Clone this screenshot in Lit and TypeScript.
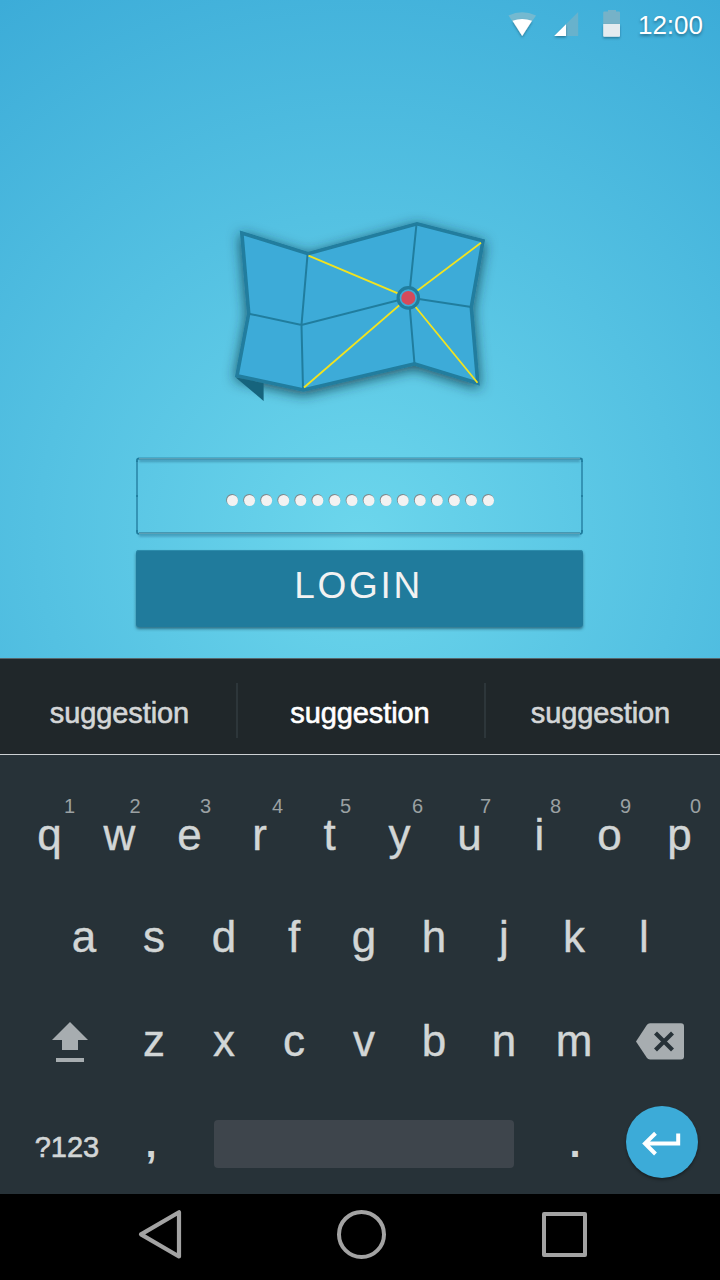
import { LitElement, html, css, svg } from "lit";
import { customElement } from "lit/decorators.js";

type Key = [letter: string, hint: string, shift: number];

const TOP_ROW: Key[] = [
  ["q", "1", 20], ["w", "2", 15.5], ["e", "3", 16], ["r", "4", 18], ["t", "5", 16],
  ["y", "6", 18], ["u", "7", 16], ["i", "8", 16], ["o", "9", 16], ["p", "0", 16],
];

@customElement("login-screen")
export class LoginScreen extends LitElement {
  static styles = css`
    :host {
      display: flex;
      flex-direction: column;
      align-items: center;
      height: 658px;
      background: radial-gradient(circle at 360px 537px, #6cd6ec 0, #3cacd8 645px);
    }
    .status {
      display: flex;
      align-self: stretch;
      height: 50px;
      justify-content: flex-end;
      padding-right: 17px;
      box-sizing: border-box;
    }
    .icons { width: 130px; height: 50px; }
    .clock {
      font-size: 26px;
      line-height: 50px;
      color: #fff;
      text-shadow: 0 2px 3px rgba(0, 40, 60, 0.45);
    }
    .map { display: block; margin: 160px 0 47px; width: 280px; height: 200px; overflow: visible; }
    .field, .login { width: 447px; display: block; overflow: visible; margin-right: 1px; }
    .field { margin-bottom: 15px; height: 78px; }
    .login {
      height: 77px;
      border: 0;
      padding: 0 2px 5px 0;
      box-sizing: border-box;
      border-radius: 3px;
      background: #207b9c;
      box-shadow: 0 2px 3px rgba(0, 30, 45, 0.5), inset 0 1px 0 #2c8cac;
      color: #f2f2f2;
      font: 37px/70px "Liberation Sans", Arial, sans-serif;
      letter-spacing: 2.7px;
      text-align: center;
    }
  `;

  render() {
    return html`
      <div class="status">
        <svg class="icons" viewBox="0 0 130 50">
          <defs>
            <filter id="s" x="-20%" y="-20%" width="140%" height="150%">
              <feDropShadow dx="0" dy="1.5" stdDeviation="1.2" flood-color="#003048" flood-opacity=".45" />
            </filter>
          </defs>
          <path d="M0.500 15.500Q14 9 28 15.500L14.200 36Z" fill="#74b9d0" />
          <path d="M4.500 20.800Q14 17 24 20.800L14.200 36Z" fill="#fff" filter="url(#s)" />
          <path d="M70.200 12V36H46.200Z" fill="#68b2cc" />
          <path d="M58 24.200V36H46.200Z" fill="#fff" filter="url(#s)" />
          <path d="M95.200 24V12.500Q95.200 11.500 96.200 11.500H100V10H108V11.500H111Q112 11.500 112 12.500V24Z" fill="#76b2c8" />
          <path d="M95.200 24H112V35.800Q112 36.800 111 36.800H96.200Q95.200 36.800 95.200 35.800Z" fill="#e4ebef" filter="url(#s)" />
        </svg>
        <span class="clock">12:00</span>
      </div>
      <svg class="map" viewBox="0 0 280 200">
        <defs>
          <filter id="m" x="-20%" y="-20%" width="140%" height="150%">
            <feDropShadow dx="0" dy="3" stdDeviation="6.500" flood-color="#0a2a38" flood-opacity=".78" />
          </filter>
        </defs>
        <path filter="url(#m)" d="M21.800 23L88 43.700L197 13.800L263 30.800L251.300 97L257.800 173.300L194.500 153.800L83.500 180L17 165.700L28.700 103.500Z"
          fill="#3cabd8" stroke="#207d9e" stroke-width="3.600" />
        <path d="M15.500 167.200L43.600 191V173.200Z" fill="#16647d" />
        <path d="M87.600 44L81.500 115L83 179M196.500 14L189 88L194.500 154M28.700 103.700L81.500 115L189 87.500L251.300 97" fill="none" stroke="#207d9e" stroke-width="2" />
        <path d="M88.500 45.700L188 87.700L261 32.800M84 177.500L188 87.700L257.500 172.700" fill="none" stroke="#f2e31f" stroke-width="1.800" />
        <circle cx="188.300" cy="87.900" r="10.200" fill="#3cabd8" stroke="#207d9e" stroke-width="3.200" />
        <circle cx="188.300" cy="87.900" r="7" fill="#d64a5b" />
      </svg>
      <svg class="field" viewBox="0 0 447 78">
        <defs>
          <filter id="f" x="-5%" y="-10" width="110%" height="98" filterUnits="userSpaceOnUse">
            <feDropShadow dx="0" dy="2" stdDeviation="1.200" flood-color="#003048" flood-opacity=".3" />
          </filter>
        </defs>
        <g filter="url(#f)">
          <rect x="3" y="0.500" width="441" height="2.500" fill="#3592b2" />
          <rect x="3" y="75" width="441" height="2.500" fill="#3592b2" />
        </g>
        <path d="M3 1.800H444M3 76.200H444" stroke="#79a9b9" stroke-width=".8" />
        <path d="M1 4V75M446 4V75" stroke="#3494b5" stroke-width="2" />
        <path d="M1 5V3Q1 1.500 3 1.500M444 1.500Q446 1.500 446 3V5M1 73V75Q1 76.800 3 76.800M444 76.800Q446 76.800 446 75V73M1 38V40M446 38V40" stroke="#207d9e" stroke-width="1.800" fill="none" />
        ${Array.from({ length: 16 }, (_, i) => svg`
          <circle cx=${96 + i * 17.07} cy="42.800" r="5.900" fill="#80888b" />
          <circle cx=${96.5 + i * 17.07} cy="43.500" r="5.500" fill="#f2f2f2" />`)}
      </svg>
      <button class="login">LOGIN</button>
    `;
  }
}

@customElement("soft-keyboard")
export class SoftKeyboard extends LitElement {
  static styles = css`
    :host { display: block; height: 536px; background: #273238; color: #d2d6d6; }
    .suggestions {
      display: flex;
      align-items: center;
      height: 97px;
      box-sizing: border-box;
      padding-top: 7px;
      background: #20272a;
      border-top: 1px solid #56666c;
      border-bottom: 1px solid #ccd1d4;
      font-size: 29px;
      letter-spacing: -0.1px;
      color: #d4d6d7;
    }
    .word {
      flex: none;
      box-sizing: border-box;
      text-align: center;
      padding-top: 6px;
      line-height: 34px;
      -webkit-text-stroke: 0.6px currentColor;
    }
    .first { width: 236px; padding-left: 3px; }
    .middle { width: 246px; padding-right: 2px; color: #fff; }
    .last { width: 234px; padding-right: 5px; }
    .rule { width: 2px; height: 55px; background: #2d363a; }
    .row { display: flex; align-items: center; }
    .one { padding: 29px 0 0 14.5px; height: 102px; }
    .two { padding-left: 49px; height: 102px; }
    .three { padding-left: 21px; height: 105px; }
    .key {
      position: relative;
      width: 70px;
      text-align: center;
      font-size: 44px;
      line-height: 102px;
      -webkit-text-stroke: 0.4px currentColor;
    }
    .hint {
      position: absolute;
      left: 0;
      right: 0;
      top: 12px;
      font-size: 20px;
      line-height: 20px;
      color: #9ba1a3;
      -webkit-text-stroke: 0;
    }
    .side { width: 98px; display: flex; justify-content: center; padding-top: 1px; }
    .back { width: 102px; }
    .four { height: 98px; }
    .mode {
      width: 134px;
      box-sizing: border-box;
      padding-top: 11px;
      text-align: center;
      font-size: 29px;
      -webkit-text-stroke: 0.6px currentColor;
    }
    .comma, .dot { width: 34px; padding-top: 2px; text-align: center; font-size: 40px; font-weight: 700; line-height: 60px; }
    .space { width: 300px; height: 48px; margin: 4px 0 0 46px; border-radius: 4px; background: #3e454c; }
    .dot { margin: 0 34px 0 44px; }
    .enter { width: 72px; height: 72px; border-radius: 50%; background: #3cabd8; box-shadow: 0 2px 3px rgba(0, 0, 0, 0.35); }
    svg { display: block; }
  `;

  private letters(text: string) {
    return [...text].map((c) => html`<span class="key">${c}</span>`);
  }

  render() {
    return html`
      <div class="suggestions">
        <span class="word first">suggestion</span><span class="rule"></span>
        <span class="word middle">suggestion</span><span class="rule"></span>
        <span class="word last">suggestion</span>
      </div>
      <div class="row one">
        ${TOP_ROW.map(([c, n, dx]) => html`<span class="key">${c}<span class="hint" style="transform: translateX(${dx}px)">${n}</span></span>`)}
      </div>
      <div class="row two">${this.letters("asdfghjkl")}</div>
      <div class="row three">
        <span class="side">
          <svg width="36" height="42" viewBox="0 0 36 42" fill="#a7adb0">
            <path d="M18 2L36 20H26V30H10V20H0Z" /><path d="M4 38H32V42H4Z" />
          </svg>
        </span>
        ${this.letters("zxcvbnm")}
        <span class="side back">
          <svg width="48" height="38" viewBox="0 0 48 38">
            <path d="M14 1.200H45Q48 1.200 48 4.200V34.400Q48 37.400 45 37.400H14Q12 37.400 11 36L0 19.400L11 2.700Q12 1.200 14 1.200Z" fill="#a7adb0" />
            <path d="M19.500 11L36.500 28M36.500 11L19.500 28" stroke="#273238" stroke-width="4.200" />
          </svg>
        </span>
      </div>
      <div class="row four">
        <span class="mode">?123</span>
        <span class="comma">,</span>
        <span class="space"></span>
        <span class="dot">.</span>
        <span class="enter">
          <svg width="72" height="72" viewBox="0 0 72 72" fill="none" stroke="#fff" stroke-width="4">
            <path d="M52.200 27.500V37.500H19.500M29.500 27.300L19 37.500L29.500 48" />
          </svg>
        </span>
      </div>
    `;
  }
}

@customElement("nav-bar")
export class NavBar extends LitElement {
  static styles = css`
    :host { display: block; height: 86px; background: #000; }
    .buttons { display: flex; align-items: center; height: 80px; padding-left: 136px; }
    .home { margin-left: 152px; }
    .recent { margin-left: 152px; }
  `;

  render() {
    return html`
      <div class="buttons">
        <svg width="48" height="52" viewBox="0 0 48 52" fill="none" stroke="#a3a3a3" stroke-width="4.200" stroke-linejoin="round">
          <path d="M43 4.300V48.500L5 26.400Z" />
        </svg>
        <svg class="home" width="50" height="52" viewBox="0 0 50 52" fill="none" stroke="#a3a3a3" stroke-width="4">
          <circle cx="25.500" cy="26.400" r="22.500" />
        </svg>
        <svg class="recent" width="52" height="52" viewBox="0 0 52 52" fill="none" stroke="#a3a3a3" stroke-width="4" stroke-linejoin="round">
          <rect x="6" y="6" width="41" height="41" />
        </svg>
      </div>
    `;
  }
}

@customElement("app-root")
export class AppRoot extends LitElement {
  static styles = css`
    :host {
      display: flex;
      flex-direction: column;
      width: 720px;
      height: 1280px;
      overflow: hidden;
      font-family: "Liberation Sans", Arial, sans-serif;
    }
  `;

  render() {
    return html`<login-screen></login-screen><soft-keyboard></soft-keyboard><nav-bar></nav-bar>`;
  }
}
